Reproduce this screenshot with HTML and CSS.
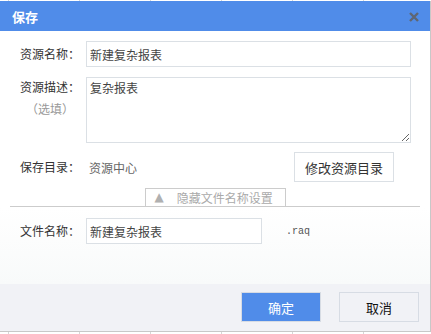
FILE: index.html
```html
<!DOCTYPE html>
<html lang="zh-CN">

<head>
    <meta charset="UTF-8">
    <title>保存</title>
    <link rel="stylesheet" href="styles.css">
</head>

<body>

<div class="dialog">
    <div class="dialog-header">
        <span class="dialog-title">保存</span>
        <svg class="dialog-close" width="10" height="10" viewBox="0 0 10 10">
            <path d="M1 1 L9 9 M9 1 L1 9" stroke="#5f6673" stroke-width="2.4" fill="none"/>
        </svg>
    </div>

    <div class="dialog-body">
        <div class="form-row">
            <label class="form-label">资源名称：</label>
            <input type="text" class="text-input" value="新建复杂报表">
        </div>

        <div class="form-row top">
            <div class="form-label">
                <div>资源描述：</div>
                <div class="optional">（选填）</div>
            </div>
            <textarea class="text-area">复杂报表</textarea>
        </div>

        <div class="form-row dir-row">
            <label class="form-label">保存目录：</label>
            <span class="dir-value">资源中心</span>
            <button class="btn btn-plain">修改资源目录</button>
        </div>

        <div class="toggle-line">
            <span class="toggle-tab"><span class="arrow">&#9650;</span>隐藏文件名称设置</span>
        </div>

        <div class="form-row file-row">
            <label class="form-label">文件名称：</label>
            <input type="text" class="text-input short" value="新建复杂报表">
            <span class="ext">.raq</span>
        </div>
    </div>

    <div class="dialog-footer">
        <button class="btn btn-primary">确定</button>
        <button class="btn btn-cancel">取消</button>
    </div>
</div>

</body>

</html>
```

FILE: styles.css
```css
* {
    margin: 0;
    padding: 0;
    box-sizing: border-box;
}

body {
    font-family: "Noto Sans CJK SC", "Liberation Sans", sans-serif;
    font-size: 12px;
    color: #333;
    background-color: #fff;
    background-image: repeating-linear-gradient(90deg, transparent 0, transparent 8px, #d6d6d6 8px, #d6d6d6 9px, transparent 9px, transparent 71px);
    padding-top: 1px;
    width: 431px;
    height: 334px;
    overflow: hidden;
}

.dialog {
    width: 431px;
    height: 331px;
    display: flex;
    flex-direction: column;
    border-right: 1px solid #c8c8c8;
    border-bottom: 1px solid #c8c8c8;
    background-color: #fff;
}

.dialog-header {
    height: 30px;
    background-color: #508ce9;
    display: flex;
    align-items: center;
    justify-content: space-between;
    padding: 0 11px 0 12px;
    flex-shrink: 0;
}

.dialog-title {
    color: #fff;
    font-size: 13px;
    font-weight: bold;
}

.dialog-close {
    display: block;
    margin-top: 1px;
}

.dialog-body {
    flex: 1;
    padding: 10px 0 0 0;
    background: linear-gradient(#fff 70%, #f8fafa);
}

.form-row {
    display: flex;
    align-items: center;
    padding: 0 19px 0 20px;
    margin-bottom: 10px;
}

.form-row.top {
    align-items: flex-start;
}

.form-label {
    width: 60px;
    margin-right: 6px;
    flex-shrink: 0;
    line-height: 20px;
    white-space: nowrap;
    color: #333;
}

.optional {
    color: #999;
    text-align: center;
    margin-top: 2px;
}

.text-input {
    flex: 1;
    height: 26px;
    border: 1px solid #dbe0e5;
    padding: 0 3px;
    font-family: inherit;
    font-size: 12px;
    color: #444;
    background: #fff;
}

.text-input.short {
    flex: none;
    width: 176px;
}

.text-area {
    flex: 1;
    height: 66px;
    border: 1px solid #dbe0e5;
    padding: 1px 3px;
    font-family: inherit;
    font-size: 12px;
    line-height: 18px;
    color: #444;
    resize: both;
}

.dir-row {
    margin-top: -1px;
    margin-bottom: 6px;
    padding-right: 36px;
}

.dir-value {
    flex: 1;
    color: #666;
    padding-left: 3px;
}

.btn {
    font-family: inherit;
    font-size: 13px;
    cursor: pointer;
}

.btn-plain {
    width: 100px;
    height: 30px;
    background: #fff;
    border: 1px solid #dbe0e5;
    color: #333;
}

.toggle-line {
    margin: 0 10px;
    border-bottom: 1px solid #ccc;
    display: flex;
    justify-content: center;
    height: 19px;
}

.toggle-tab {
    width: 141px;
    height: 18px;
    border: 1px solid #ccc;
    border-bottom: none;
    color: #aaa;
    font-size: 12px;
    line-height: 17px;
    padding-left: 9px;
    display: flex;
    align-items: center;
}

.arrow {
    font-size: 12px;
    margin-right: 13px;
    font-family: "DejaVu Sans", sans-serif;
    color: #b0b0b0;
}

.file-row {
    margin-top: 11px;
}

.ext {
    margin-left: 24px;
    font-family: "Liberation Mono", monospace;
    font-size: 10px;
    color: #555;
}

.dialog-footer {
    height: 47px;
    flex-shrink: 0;
    background-color: #f1f2f6;
    display: flex;
    justify-content: flex-end;
    align-items: flex-start;
    padding: 8px 11px 0 0;
    gap: 18px;
}

.btn-primary,
.btn-cancel {
    width: 80px;
    height: 30px;
}

.btn-primary {
    background-color: #508ce9;
    border: 1px solid #d7dce4;
    color: #fff;
}

.btn-cancel {
    background-color: #f1f2f6;
    border: 1px solid #d7dce4;
    color: #111;
}
```
